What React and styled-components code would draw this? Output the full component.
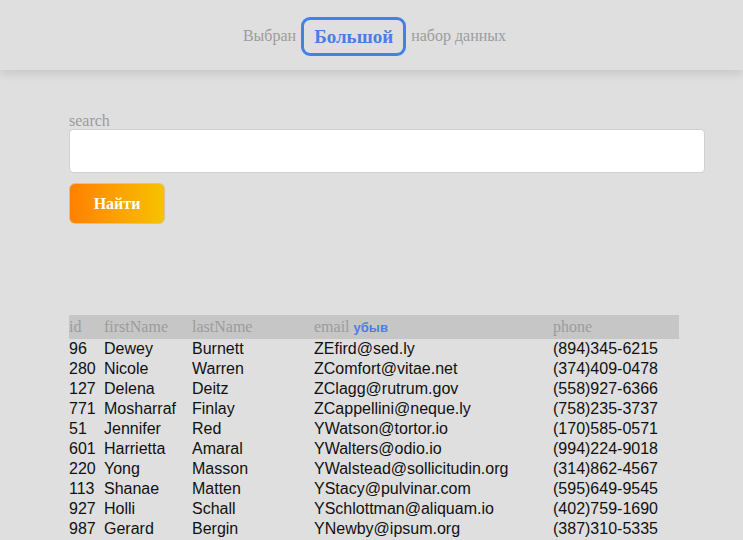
import React from "react";
import styled, { createGlobalStyle } from "styled-components";

const GlobalStyle = createGlobalStyle`
  body {
    margin: 0;
    background: #dfdfdf;
    font-family: "Liberation Serif", serif;
  }
`;

const Header = styled.header`
  height: 70px;
  display: flex;
  align-items: center;
  justify-content: center;
  gap: 5px;
  background: #dfdfdf;
  box-shadow: 0 3px 10px rgba(0, 0, 0, 0.12);
  color: #9c9c9c;
  font-size: 16px;
  padding: 2px 0 0 6px;
  box-sizing: border-box;
`;

const Picked = styled.span`
  border: 3px solid #4280ea;
  border-radius: 9px;
  padding: 6px 10px 5px;
  color: #4a7ee6;
  font-weight: bold;
  font-size: 19px;
  line-height: 22px;
`;

const Main = styled.main`
  padding: 42px 38px 0 69px;
`;

const Label = styled.div`
  color: #9c9c9c;
  font-size: 16px;
  line-height: 17px;
`;

const Input = styled.input`
  display: block;
  box-sizing: border-box;
  width: 100%;
  height: 44px;
  margin-top: 0;
  border: 1px solid #cfd0d6;
  border-radius: 4px;
  background: #fff;
`;

const Button = styled.button`
  margin-top: 10px;
  width: 96px;
  height: 41px;
  border: 1px solid #e0c090;
  border-radius: 6px;
  background: linear-gradient(90deg, #ff8000 0%, #f8c200 100%);
  color: #fff;
  font-family: "Liberation Serif", serif;
  font-weight: bold;
  font-size: 16px;
`;

const Table = styled.table`
  margin-top: 91px;
  width: 610px;
  border-collapse: collapse;
  table-layout: fixed;
`;

const HeadRow = styled.tr`
  background: #c6c6c6;
  height: 24px;
`;

const Th = styled.th`
  text-align: left;
  font-weight: normal;
  color: #9c9c9c;
  font-size: 16px;
  padding: 0;
  width: ${(p) => p.w}px;
`;

const Sort = styled.span`
  color: #4a7ee6;
  font-family: "Liberation Sans", sans-serif;
  font-weight: bold;
  font-size: 13px;
`;

const Td = styled.td`
  font-family: "Liberation Sans", sans-serif;
  font-size: 16px;
  color: #111;
  padding: 0;
  height: 20px;
  line-height: 20px;
  white-space: nowrap;
`;

const rows = [
  ["96", "Dewey", "Burnett", "ZEfird@sed.ly", "(894)345-6215"],
  ["280", "Nicole", "Warren", "ZComfort@vitae.net", "(374)409-0478"],
  ["127", "Delena", "Deitz", "ZClagg@rutrum.gov", "(558)927-6366"],
  ["771", "Mosharraf", "Finlay", "ZCappellini@neque.ly", "(758)235-3737"],
  ["51", "Jennifer", "Red", "YWatson@tortor.io", "(170)585-0571"],
  ["601", "Harrietta", "Amaral", "YWalters@odio.io", "(994)224-9018"],
  ["220", "Yong", "Masson", "YWalstead@sollicitudin.org", "(314)862-4567"],
  ["113", "Shanae", "Matten", "YStacy@pulvinar.com", "(595)649-9545"],
  ["927", "Holli", "Schall", "YSchlottman@aliquam.io", "(402)759-1690"],
  ["987", "Gerard", "Bergin", "YNewby@ipsum.org", "(387)310-5335"],
];

export default function App() {
  return (
    <>
      <GlobalStyle />
      <Header>
        <span>Выбран</span>
        <Picked>Большой</Picked>
        <span>набор данных</span>
      </Header>
      <Main>
        <Label>search</Label>
        <Input />
        <Button>Найти</Button>
        <Table>
          <thead>
            <HeadRow>
              <Th w={35}>id</Th>
              <Th w={88}>firstName</Th>
              <Th w={122}>lastName</Th>
              <Th w={239}>
                email <Sort>убыв</Sort>
              </Th>
              <Th w={126}>phone</Th>
            </HeadRow>
          </thead>
          <tbody>
            {rows.map((r) => (
              <tr key={r[0]}>
                {r.map((c, i) => (
                  <Td key={i}>{c}</Td>
                ))}
              </tr>
            ))}
          </tbody>
        </Table>
      </Main>
    </>
  );
}
